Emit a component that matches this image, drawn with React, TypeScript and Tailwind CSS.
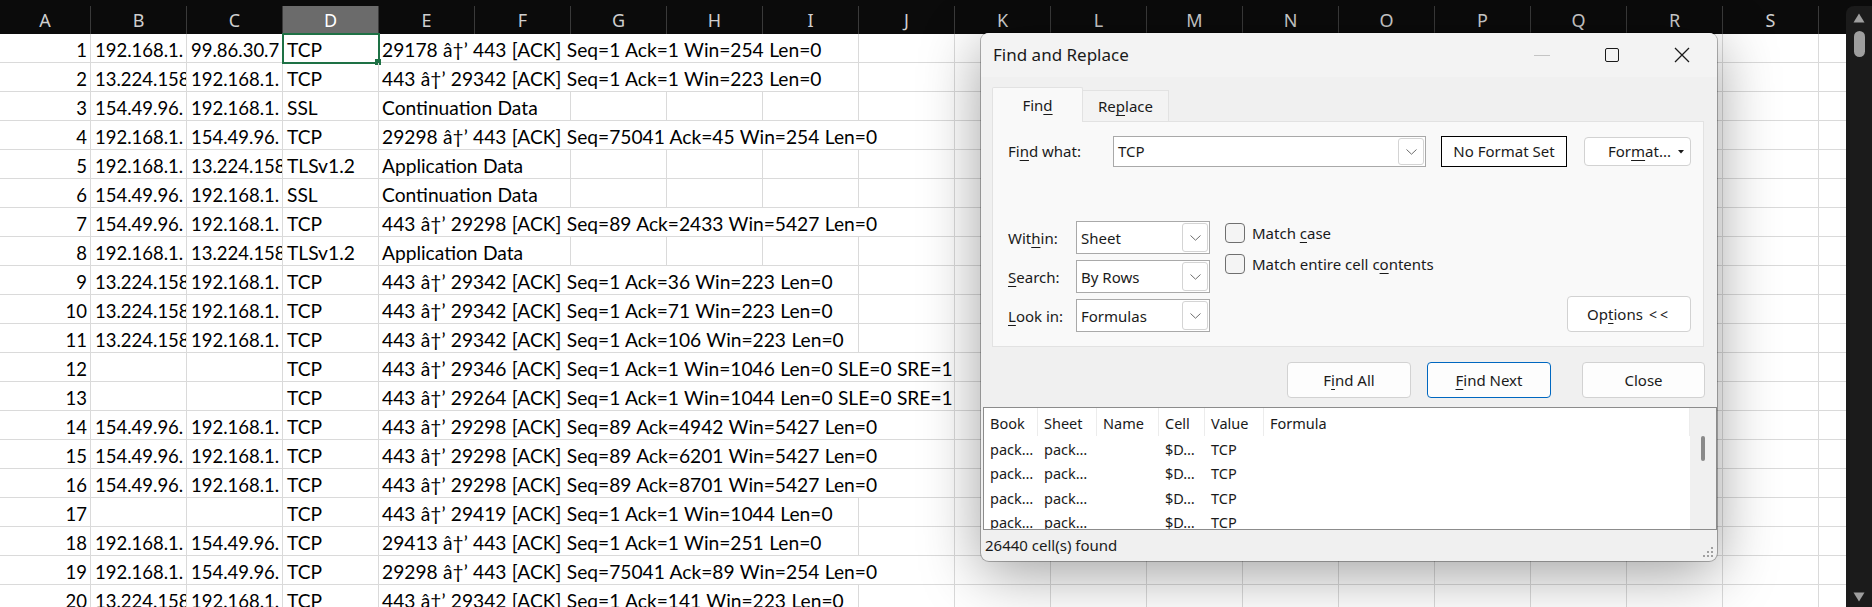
import React from 'react';

const ARROW = '\u00e2\u2020\u2019';

type Row = { n: number; b: string; c: string; d: string; e: string; span: number };

const rows: Row[] = [
  { n: 1, b: '192.168.1.', c: '99.86.30.7', d: 'TCP', e: `29178 ${ARROW} 443 [ACK] Seq=1 Ack=1 Win=254 Len=0`, span: 5 },
  { n: 2, b: '13.224.158', c: '192.168.1.', d: 'TCP', e: `443 ${ARROW} 29342 [ACK] Seq=1 Ack=1 Win=223 Len=0`, span: 5 },
  { n: 3, b: '154.49.96.', c: '192.168.1.', d: 'SSL', e: 'Continuation Data', span: 2 },
  { n: 4, b: '192.168.1.', c: '154.49.96.', d: 'TCP', e: `29298 ${ARROW} 443 [ACK] Seq=75041 Ack=45 Win=254 Len=0`, span: 6 },
  { n: 5, b: '192.168.1.', c: '13.224.158', d: 'TLSv1.2', e: 'Application Data', span: 2 },
  { n: 6, b: '154.49.96.', c: '192.168.1.', d: 'SSL', e: 'Continuation Data', span: 2 },
  { n: 7, b: '154.49.96.', c: '192.168.1.', d: 'TCP', e: `443 ${ARROW} 29298 [ACK] Seq=89 Ack=2433 Win=5427 Len=0`, span: 6 },
  { n: 8, b: '192.168.1.', c: '13.224.158', d: 'TLSv1.2', e: 'Application Data', span: 2 },
  { n: 9, b: '13.224.158', c: '192.168.1.', d: 'TCP', e: `443 ${ARROW} 29342 [ACK] Seq=1 Ack=36 Win=223 Len=0`, span: 5 },
  { n: 10, b: '13.224.158', c: '192.168.1.', d: 'TCP', e: `443 ${ARROW} 29342 [ACK] Seq=1 Ack=71 Win=223 Len=0`, span: 5 },
  { n: 11, b: '13.224.158', c: '192.168.1.', d: 'TCP', e: `443 ${ARROW} 29342 [ACK] Seq=1 Ack=106 Win=223 Len=0`, span: 5 },
  { n: 12, b: '', c: '', d: 'TCP', e: `443 ${ARROW} 29346 [ACK] Seq=1 Ack=1 Win=1046 Len=0 SLE=0 SRE=1`, span: 6 },
  { n: 13, b: '', c: '', d: 'TCP', e: `443 ${ARROW} 29264 [ACK] Seq=1 Ack=1 Win=1044 Len=0 SLE=0 SRE=1`, span: 6 },
  { n: 14, b: '154.49.96.', c: '192.168.1.', d: 'TCP', e: `443 ${ARROW} 29298 [ACK] Seq=89 Ack=4942 Win=5427 Len=0`, span: 6 },
  { n: 15, b: '154.49.96.', c: '192.168.1.', d: 'TCP', e: `443 ${ARROW} 29298 [ACK] Seq=89 Ack=6201 Win=5427 Len=0`, span: 6 },
  { n: 16, b: '154.49.96.', c: '192.168.1.', d: 'TCP', e: `443 ${ARROW} 29298 [ACK] Seq=89 Ack=8701 Win=5427 Len=0`, span: 6 },
  { n: 17, b: '', c: '', d: 'TCP', e: `443 ${ARROW} 29419 [ACK] Seq=1 Ack=1 Win=1044 Len=0`, span: 5 },
  { n: 18, b: '192.168.1.', c: '154.49.96.', d: 'TCP', e: `29413 ${ARROW} 443 [ACK] Seq=1 Ack=1 Win=251 Len=0`, span: 5 },
  { n: 19, b: '192.168.1.', c: '154.49.96.', d: 'TCP', e: `29298 ${ARROW} 443 [ACK] Seq=75041 Ack=89 Win=254 Len=0`, span: 6 },
  { n: 20, b: '13.224.158', c: '192.168.1.', d: 'TCP', e: `443 ${ARROW} 29342 [ACK] Seq=1 Ack=141 Win=223 Len=0`, span: 5 },
];

const letters = ['B', 'C', 'D', 'E', 'F', 'G', 'H', 'I', 'J', 'K', 'L', 'M', 'N', 'O', 'P', 'Q', 'R', 'S', 'T'];

const cell = 'w-[96px] shrink-0 h-full border-r border-[#dadada] pl-[4px] pt-[3px] leading-[26px] whitespace-nowrap';

function SheetRow({ row }: { row: Row }) {
  const rest = letters.length - 3 - row.span;
  return (
    <div className="flex h-[29px] border-b border-[#dadada]">
      <div className="w-[91px] shrink-0 h-full border-r border-[#dadada] pr-[3px] pt-[3px] leading-[26px] text-right">{row.n}</div>
      <div className={`${cell} overflow-hidden`}>{row.b}</div>
      <div className={`${cell} overflow-hidden`}>{row.c}</div>
      <div className={`${cell} relative text-[19.2px] pl-[3px]`}>
        {row.d}
        {row.n === 1 && (
          <div className="absolute -left-[1px] -top-[1px] w-[98px] h-[31px] border-2 border-[#1e7145]">
            <div className="absolute -right-[3px] -bottom-[3px] w-[6px] h-[6px] bg-[#1e7145]" />
          </div>
        )}
      </div>
      <div className="shrink-0 h-full border-r border-[#dadada] pl-[3px] pt-[3px] leading-[26px] whitespace-nowrap text-[19.2px] [word-spacing:0.5px]" style={{ width: 96 * row.span }}>
        {row.e}
      </div>
      {Array.from({ length: rest }).map((_, i) => (
        <div key={i} className="w-[96px] shrink-0 h-full border-r border-[#dadada]" />
      ))}
    </div>
  );
}

function Chevron() {
  return (
    <svg width="11" height="6" viewBox="0 0 11 6" fill="none">
      <path d="M0.5 0.5L5.5 5.2L10.5 0.5" stroke="#6e6e6e" strokeWidth="1" />
    </svg>
  );
}

function DropBtn() {
  return (
    <div className="w-[26px] h-full bg-white border border-[#d4d4d4] rounded-[3px] flex items-center justify-center">
      <Chevron />
    </div>
  );
}

function Combo({ value }: { value: string }) {
  return (
    <div className="w-[134px] h-[33px] bg-white border border-[#a9a9a9] flex items-center pl-[4px] pr-[1px] py-[1px]">
      <span className="flex-1 pt-[1px]">{value}</span>
      <DropBtn />
    </div>
  );
}

function Check({ children }: { children: React.ReactNode }) {
  return (
    <div className="flex items-center h-[20px]">
      <div className="w-[20px] h-[20px] rounded-[4px] border border-[#6f6f6f] bg-[#f4f4f4]" />
      <span className="ml-[7px] pt-[1px]">{children}</span>
    </div>
  );
}

function U({ children }: { children: React.ReactNode }) {
  return <span className="underline underline-offset-[3px] decoration-1">{children}</span>;
}

const results = ['pack…', 'pack…', 'pack…', 'pack…'];

function Dialog() {
  return (
    <div className="absolute left-[981px] top-[33px] w-[736px] h-[528px] rounded-[8px] overflow-hidden bg-[#f0f0f0] shadow-[0_0_0_1px_rgba(0,0,0,0.28),0_12px_60px_rgba(0,0,0,0.38)] font-['Noto_Sans',sans-serif] text-[15px] text-[#1a1a1a] flex flex-col">
      {/* title bar */}
      <div className="h-[44px] shrink-0 bg-[#f3f3f3] flex items-center">
        <div className="pl-[12px] text-[17px] flex-1">Find and Replace</div>
        <div className="w-[70px] h-full flex items-center justify-center">
          <div className="w-[16px] h-px bg-[#c4c4c4]" />
        </div>
        <div className="w-[70px] h-full flex items-center justify-center">
          <div className="w-[14px] h-[14px] border-[1.5px] border-[#1a1a1a] rounded-[2px]" />
        </div>
        <div className="w-[70px] h-full flex items-center justify-center">
          <svg width="16" height="16" viewBox="0 0 16 16">
            <path d="M1 1L15 15M15 1L1 15" stroke="#1a1a1a" strokeWidth="1.3" />
          </svg>
        </div>
      </div>

      {/* tabs */}
      <div className="h-[45px] shrink-0 flex items-end pl-[11px]">
        <div className="relative z-10 w-[91px] h-[35px] bg-[#f9f9f9] border border-b-0 border-[#e2e2e2] rounded-t-[2px] flex items-center justify-center pt-[1px]">
          Fin<U>d</U>
        </div>
        <div className="w-[86px] h-[33px] -mb-px bg-[#f3f3f3] border border-l-0 border-[#e2e2e2] flex items-center justify-center">
          Re<U>p</U>lace
        </div>
      </div>

      {/* panel */}
      <div className="h-[226px] shrink-0 ml-[11px] mr-[13px] -mt-px bg-[#f9f9f9] border border-[#e2e2e2] pl-[15px] pr-[12px] pt-[14px] flex flex-col">
        <div className="flex items-center h-[31px]">
          <div className="w-[105px]">Fi<U>n</U>d what:</div>
          <div className="w-[313px] h-[31px] bg-white border border-[#a9a9a9] flex items-center pl-[4px] pr-[1px] py-[1px]">
            <span className="flex-1">TCP</span>
            <DropBtn />
          </div>
          <div className="ml-[15px] w-[126px] h-[31px] bg-white border border-black flex items-center justify-center">No Format Set</div>
          <div className="ml-[17px] w-[107px] h-[29px] bg-white border border-[#d2d2d2] rounded-[4px] flex items-center pl-[23px] relative">
            For<U>m</U>at...
            <svg className="absolute right-[6px] top-[12px]" width="6" height="4" viewBox="0 0 6 4">
              <path d="M0 0H6L3 3.5Z" fill="#1a1a1a" />
            </svg>
          </div>
        </div>

        <div className="mt-[54px] flex">
          <div className="flex flex-col gap-[6px]">
            <div className="flex items-center">
              <div className="w-[68px] pt-[2px]">Wit<U>h</U>in:</div>
              <Combo value="Sheet" />
            </div>
            <div className="flex items-center">
              <div className="w-[68px] pt-[2px]"><U>S</U>earch:</div>
              <Combo value="By Rows" />
            </div>
            <div className="flex items-center">
              <div className="w-[68px] pt-[2px]"><U>L</U>ook in:</div>
              <Combo value="Formulas" />
            </div>
          </div>
          <div className="ml-[15px] pt-[2px] flex flex-col gap-[11px]">
            <Check>Match <U>c</U>ase</Check>
            <Check>Match entire cell c<U>o</U>ntents</Check>
          </div>
          <div className="ml-auto self-end w-[124px] h-[36px] bg-white border border-[#d2d2d2] rounded-[4px] flex items-center justify-center">
            Op<U>t</U>ions<span className="ml-[6px] text-[14px] tracking-[3px]">&lt;&lt;</span>
          </div>
        </div>
      </div>

      {/* action buttons */}
      <div className="mt-[15px] h-[36px] shrink-0 flex justify-end pr-[12px]">
        <div className="w-[124px] h-full bg-[#fdfdfd] border border-[#d2d2d2] rounded-[4px] flex items-center justify-center">F<U>i</U>nd All</div>
        <div className="ml-[16px] w-[124px] h-full bg-[#fdfdfd] border border-[#0067c0] rounded-[4px] flex items-center justify-center"><U>F</U>ind Next</div>
        <div className="ml-[31px] w-[123px] h-full bg-[#fdfdfd] border border-[#d2d2d2] rounded-[4px] flex items-center justify-center">Close</div>
      </div>

      {/* results list */}
      <div className="mt-[9px] ml-[2px] h-[123px] shrink-0 bg-white border border-[#8c8c8c] flex overflow-hidden text-[14.5px]">
        <div className="flex-1 flex flex-col">
          <div className="h-[28px] shrink-0 flex items-center">
            <div className="w-[54px] h-full border-r border-[#ececec] pl-[6px] pt-[3px] flex items-center">Book</div>
            <div className="w-[59px] h-full border-r border-[#ececec] pl-[6px] pt-[3px] flex items-center">Sheet</div>
            <div className="w-[62px] h-full border-r border-[#ececec] pl-[6px] pt-[3px] flex items-center">Name</div>
            <div className="w-[46px] h-full border-r border-[#ececec] pl-[6px] pt-[3px] flex items-center">Cell</div>
            <div className="w-[59px] h-full border-r border-[#ececec] pl-[6px] pt-[3px] flex items-center">Value</div>
            <div className="flex-1 h-full border-r border-[#ececec] pl-[6px] pt-[3px] flex items-center">Formula</div>
          </div>
          {results.map((r, i) => (
            <div key={i} className="h-[24.5px] shrink-0 flex items-center pt-[3px]">
              <div className="w-[54px] pl-[6px]">{r}</div>
              <div className="w-[59px] pl-[6px]">{r}</div>
              <div className="w-[62px] pl-[6px]" />
              <div className="w-[46px] pl-[6px]">$D…</div>
              <div className="w-[59px] pl-[6px]">TCP</div>
            </div>
          ))}
        </div>
        <div className="w-[26px] shrink-0 bg-[#f0f0f0] flex justify-center pt-[28px]">
          <div className="w-[4px] h-[25px] rounded-full bg-[#8a8a8a]" />
        </div>
      </div>

      {/* status */}
      <div className="flex-1 flex items-center pl-[4px] relative">
        26440 cell(s) found
        <svg className="absolute right-[4px] bottom-[4px]" width="10" height="10" viewBox="0 0 10 10">
          <g fill="#a0a0a0">
            <rect x="8" y="0" width="2" height="2" />
            <rect x="4" y="4" width="2" height="2" />
            <rect x="8" y="4" width="2" height="2" />
            <rect x="0" y="8" width="2" height="2" />
            <rect x="4" y="8" width="2" height="2" />
            <rect x="8" y="8" width="2" height="2" />
          </g>
        </svg>
      </div>
    </div>
  );
}

export default function App() {
  return (
    <div className="relative w-[1872px] h-[607px] overflow-hidden bg-[#0b0b0b] flex">
      <div className="flex-1 overflow-hidden bg-white flex flex-col font-['Lato',sans-serif] text-[18.5px] text-black">
        <div className="h-[34px] shrink-0 bg-[#0b0b0b] pt-[6px] flex font-['Noto_Sans',sans-serif] text-[18px] text-[#cfcfcf]">
          <div className="w-[91px] shrink-0 h-full border-r border-[#3a3a3a] flex items-center justify-center pt-[1px]">A</div>
          {letters.map((l) => (
            <div
              key={l}
              className={`w-[96px] shrink-0 h-full border-r border-[#3a3a3a] flex items-center justify-center pt-[1px] ${l === 'D' ? 'bg-[#6b6b6b] text-white' : ''}`}
            >
              {l}
            </div>
          ))}
        </div>
        {rows.map((r) => (
          <SheetRow key={r.n} row={r} />
        ))}
      </div>

      {/* vertical scrollbar */}
      <div className="w-[26px] shrink-0 pt-[6px]">
        <div className="h-full bg-[#1b1b1b] rounded-tl-[8px] flex flex-col items-center">
          <svg className="mt-[7px]" width="12" height="10" viewBox="0 0 12 10">
            <path d="M6 0.5L11.5 9.5H0.5Z" fill="#9e9e9e" />
          </svg>
          <div className="mt-[8px] w-[11px] h-[26px] rounded-full bg-[#9e9e9e]" />
          <div className="flex-1" />
          <svg className="mb-[5px]" width="12" height="10" viewBox="0 0 12 10">
            <path d="M0.5 0.5H11.5L6 9.5Z" fill="#9e9e9e" />
          </svg>
        </div>
      </div>

      <Dialog />
    </div>
  );
}
